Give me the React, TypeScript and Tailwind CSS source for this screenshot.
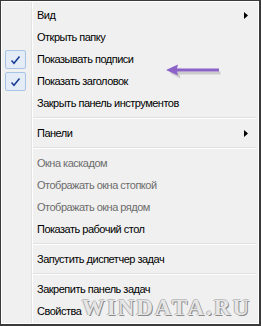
import React from "react";

type Item = {
  label?: string;
  sep?: boolean;
  checked?: boolean;
  disabled?: boolean;
  sub?: boolean;
};

const items: Item[] = [
  { label: "Вид", sub: true },
  { label: "Открыть папку" },
  { label: "Показывать подписи", checked: true },
  { label: "Показать заголовок", checked: true },
  { label: "Закрыть панель инструментов" },
  { sep: true },
  { label: "Панели", sub: true },
  { sep: true },
  { label: "Окна каскадом", disabled: true },
  { label: "Отображать окна стопкой", disabled: true },
  { label: "Отображать окна рядом", disabled: true },
  { label: "Показать рабочий стол" },
  { sep: true },
  { label: "Запустить диспетчер задач" },
  { sep: true },
  { label: "Закрепить панель задач" },
  { label: "Свойства" },
];

function Check() {
  return (
    <div className="absolute left-[3px] top-[2px] w-[21px] h-[19px] rounded-[2px] border border-[#a8c4e4] bg-[#e4ecf8] flex items-center justify-center">
      <svg width="11" height="10" viewBox="0 0 11 10">
        <path d="M1.5 5.5 L4 8.2 L9.5 1.5" fill="none" stroke="#1a3f94" strokeWidth="1.6" />
      </svg>
    </div>
  );
}

export default function App() {
  return (
    <div className="relative w-[261px] h-[326px] border-l border-t border-r-2 border-b-2 border-[#3a3a3a] bg-white">
      <div
        className="h-full border border-white pt-[2px] bg-[linear-gradient(to_right,#f0f0f0_29px,#e2e3e3_29px,#e2e3e3_30px,#ffffff_30px,#ffffff_31px,#f0f0f0_31px)]"
        style={{ fontFamily: '"Liberation Sans", Arial, sans-serif' }}
      >
        {items.map((it, i) =>
          it.sep ? (
            <div key={i} className="h-[8px] flex items-center pl-[31px] pr-[2px]">
              <div className="w-full h-[2px] border-t border-[#e0e0e0] border-b border-b-white" />
            </div>
          ) : (
            <div key={i} className="relative h-[22px] flex items-center pl-[35px] pr-[10px]">
              {it.checked && <Check />}
              <span className={`text-[11px] leading-none tracking-[-0.5px] ${it.disabled ? "text-[#6d6d6d]" : "text-[#000000]"}`}>{it.label}</span>
              {it.sub && (
                <svg className="ml-auto" width="4" height="7" viewBox="0 0 4 7">
                  <path d="M0 0 L4 3.5 L0 7 Z" fill="#000" />
                </svg>
              )}
            </div>
          )
        )}
      </div>

      {/* purple arrow */}
      <svg className="absolute left-[160px] top-[60px]" width="64" height="20" viewBox="0 0 64 20">
        <path d="M7 10 L18 4.5 L17 8.5 L58 8.5 L58 11.5 L17 11.5 L18 15.5 Z" fill="#000" opacity="0.15" transform="translate(1.5 2)" />
        <path d="M5 9 L17 3.5 L16 7.5 L58 7.5 L58 10.5 L16 10.5 L17 14.5 Z" fill="#8c62c8" />
      </svg>

      {/* watermark */}
      <div
        className="absolute right-[8px] bottom-[5px] text-[23px] font-bold leading-none tracking-[2px] text-[#e6e6e6] [text-shadow:1px_1px_0_#8a8a8a,-1px_0_0_#b0b0b0,0_-1px_0_#c0c0c0]"
        style={{ fontFamily: '"Liberation Serif", serif' }}
      >
        WINDATA.RU
      </div>
    </div>
  );
}
